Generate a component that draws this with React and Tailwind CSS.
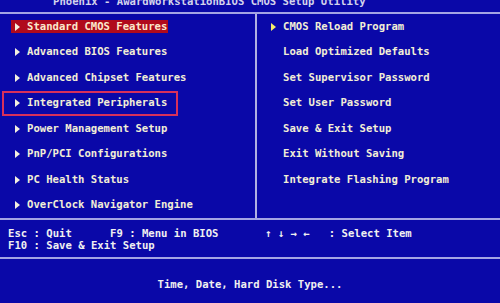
import React from "react";

const leftItems = [
  "Standard CMOS Features",
  "Advanced BIOS Features",
  "Advanced Chipset Features",
  "Integrated Peripherals",
  "Power Management Setup",
  "PnP/PCI Configurations",
  "PC Health Status",
  "OverClock Navigator Engine",
];

const rightItems = [
  { label: "CMOS Reload Program", arrow: true },
  { label: "Load Optimized Defaults" },
  { label: "Set Supervisor Password" },
  { label: "Set User Password" },
  { label: "Save & Exit Setup" },
  { label: "Exit Without Saving" },
  { label: "Integrate Flashing Program" },
];

const Arrow = ({ color = "border-l-[#f4f0e0]" }) => (
  <span className="w-[12px] flex items-center">
    <span
      className={`ml-[4px] w-0 h-0 border-l-[5px] border-y-[4px] border-y-transparent ${color}`}
    />
  </span>
);

const App = () => {
  return (
    <div
      className="w-[500px] h-[303px] overflow-hidden bg-[#0a08a8] font-bold text-[10.6px] text-[#f2eed6]"
      style={{ fontFamily: '"DejaVu Sans Mono", "Liberation Mono", monospace' }}
    >
      {/* title, cut off at the top */}
      <div className="h-[12px] overflow-hidden">
        <div className="-mt-[5px] pl-[53px] leading-[12px] whitespace-pre text-[#d4d4ec]">
          Phoenix - AwardWorkstationBIOS CMOS Setup Utility
        </div>
      </div>
      <div className="h-[2px] bg-[#a4a4e4]" />

      {/* menus */}
      <div className="flex h-[204px]">
        <div className="w-[255px]">
          {leftItems.map((item, i) => (
            <div
              key={item}
              className={`h-[25.5px] flex items-center ${
                i === 3
                  ? "ml-[2px] w-[176px] pl-[9px] ring-2 ring-inset ring-[#d8305a]"
                  : "pl-[11px]"
              }`}
            >
              <span
                className={`flex items-center h-[13px] pr-[1px] whitespace-pre ${
                  i === 0 ? "bg-[#b00a1c] text-[#fbe8cc]" : ""
                }`}
              >
                <Arrow />
                <span className="ml-[4px]">{item}</span>
              </span>
            </div>
          ))}
        </div>
        <div className="w-[2px] bg-[#b0b0e2]" />
        <div className="flex-1 pl-[10px]">
          {rightItems.map((item) => (
            <div key={item.label} className="h-[25.5px] flex items-center whitespace-pre">
              {item.arrow ? (
                <Arrow color="border-l-[#f6ee6a]" />
              ) : (
                <span className="w-[12px]" />
              )}
              <span className="ml-[4px]">{item.label}</span>
            </div>
          ))}
        </div>
      </div>
      <div className="h-[2px] bg-[#a4a4e4]" />

      {/* key help */}
      <div className="flex h-[37px] pt-[7px] leading-[12px] text-[#f0f0f0] whitespace-pre">
        <div className="w-[256px] pl-[8px]">
          <div>Esc : Quit      F9 : Menu in BIOS</div>
          <div>F10 : Save &amp; Exit Setup</div>
        </div>
        <div className="pl-[9px]">
          <div>↑ ↓ → ←   : Select Item</div>
        </div>
      </div>
      <div className="h-[2px] bg-[#a4a4e4]" />

      {/* status line */}
      <div className="h-[44px] pt-[19px] leading-[12px] text-center text-[#f0f0f0] whitespace-pre">
        Time, Date, Hard Disk Type...
      </div>
    </div>
  );
};

export default App;
